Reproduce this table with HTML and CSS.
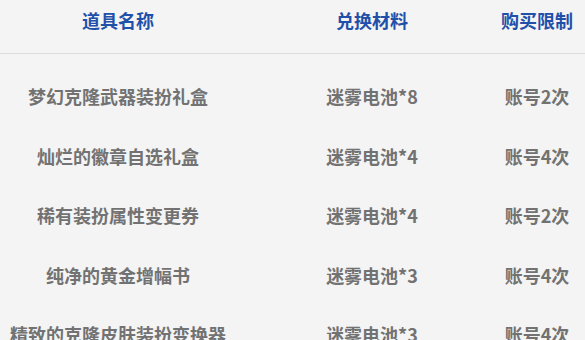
FILE: index.html
```html
<!DOCTYPE html>
<html lang="zh">
<head>
<meta charset="utf-8">
<link rel="stylesheet" href="styles.css">
</head>
<body>
<div class="table">
  <div class="row head">
    <div class="cell">道具名称</div>
    <div class="cell">兑换材料</div>
    <div class="cell">购买限制</div>
  </div>
  <div class="body">
    <div class="row">
      <div class="cell">梦幻克隆武器装扮礼盒</div>
      <div class="cell">迷雾电池*8</div>
      <div class="cell">账号2次</div>
    </div>
    <div class="row">
      <div class="cell">灿烂的徽章自选礼盒</div>
      <div class="cell">迷雾电池*4</div>
      <div class="cell">账号4次</div>
    </div>
    <div class="row">
      <div class="cell">稀有装扮属性变更券</div>
      <div class="cell">迷雾电池*4</div>
      <div class="cell">账号2次</div>
    </div>
    <div class="row">
      <div class="cell">纯净的黄金增幅书</div>
      <div class="cell">迷雾电池*3</div>
      <div class="cell">账号4次</div>
    </div>
    <div class="row">
      <div class="cell">精致的克隆皮肤装扮变换器</div>
      <div class="cell">迷雾电池*3</div>
      <div class="cell">账号4次</div>
    </div>
  </div>
</div>
</body>
</html>
```
FILE: styles.css
```css
html, body {
  margin: 0;
  padding: 0;
  background: #f4f4f4;
  overflow: hidden;
}
body {
  width: 585px;
  height: 340px;
  font-family: "Noto Sans CJK SC", "Noto Sans", sans-serif;
  font-size: 18px;
}
.table {
  width: 585px;
}
.row {
  display: grid;
  grid-template-columns: 236px 272px 58px 19px;
  white-space: nowrap;
}
.cell {
  display: flex;
  justify-content: center;
  min-width: 0;
}
.head {
  color: #1f50aa;
  font-weight: 700;
  padding-top: 9px;
  line-height: 22px;
  height: 22px;
  padding-bottom: 22px;
  border-bottom: 1px solid #dcdcdc;
}
.body {
  padding-top: 13px;
  color: #727272;
  font-weight: 700;
}
.body .row {
  height: 59.5px;
  line-height: 59.5px;
}
```
